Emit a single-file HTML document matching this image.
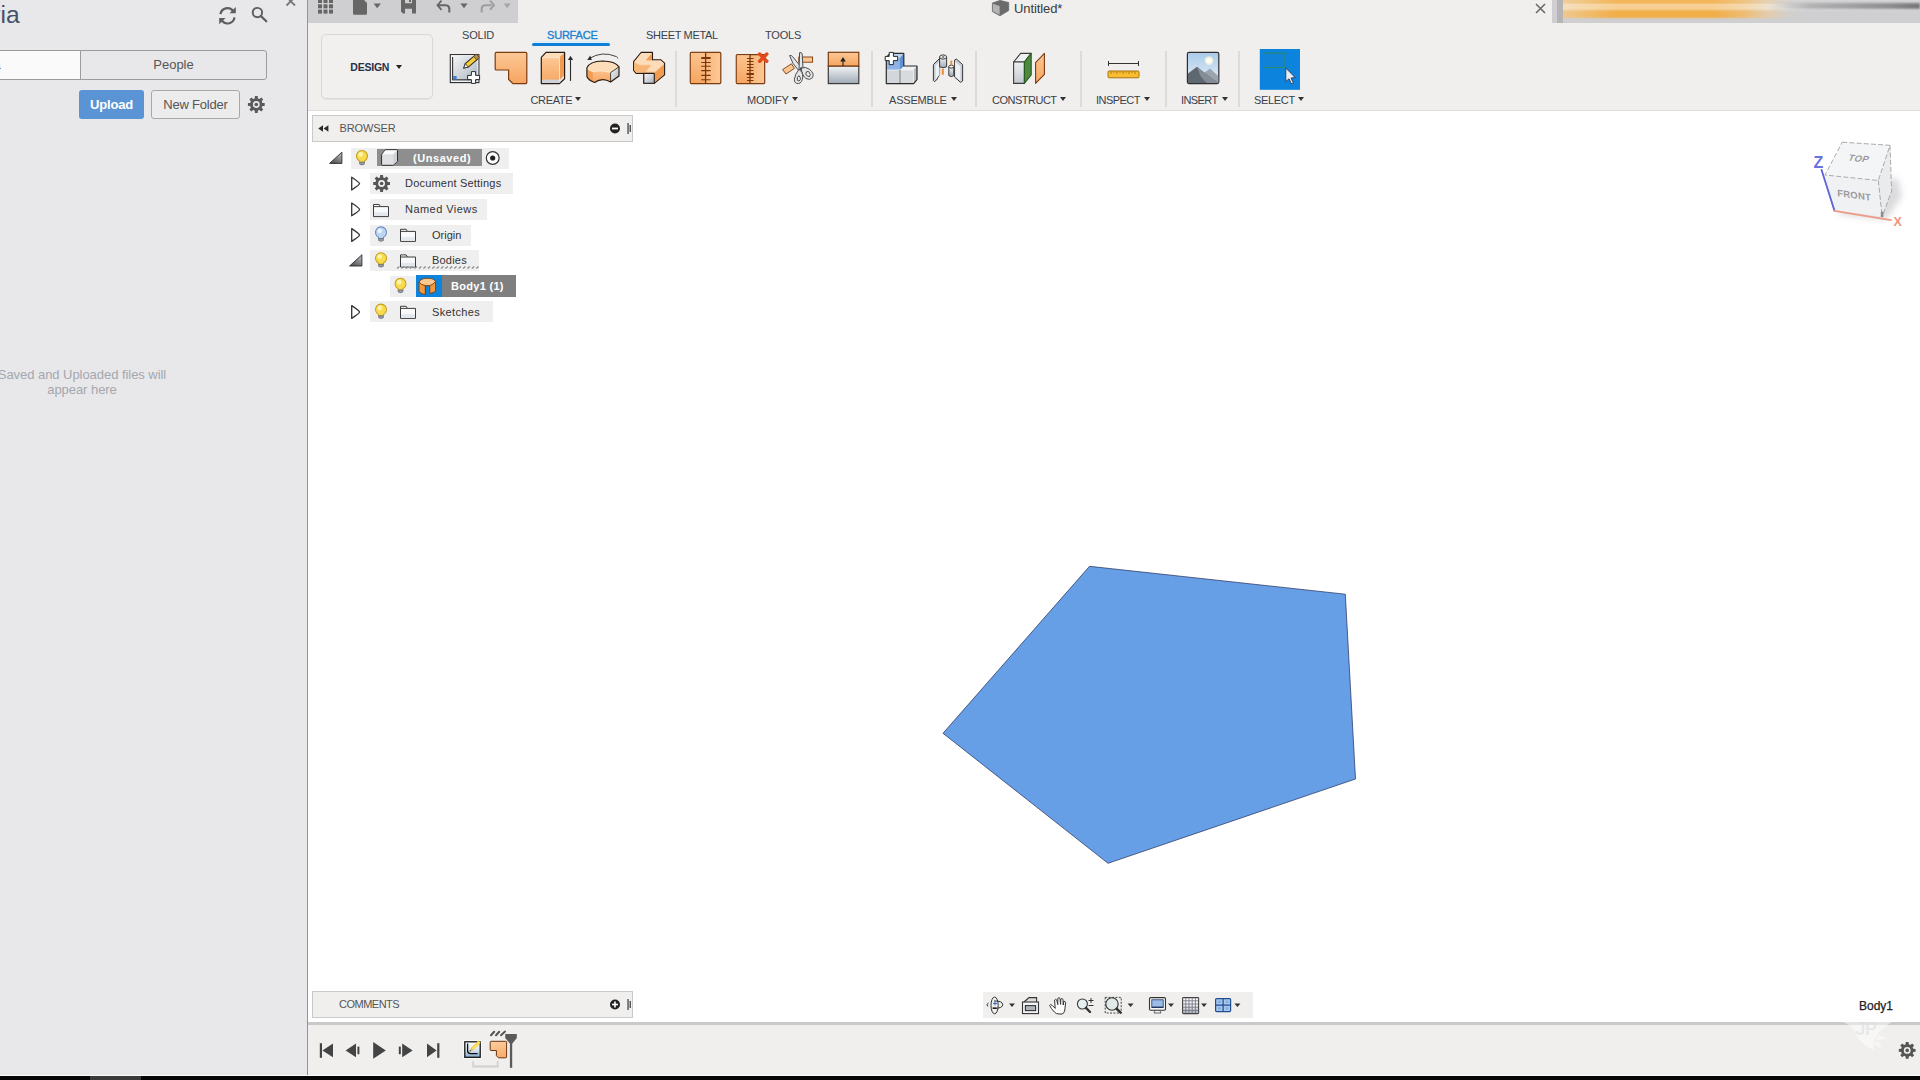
<!DOCTYPE html>
<html lang="en">
<head>
<meta charset="utf-8">
<title>Untitled*</title>
<style>
*{box-sizing:border-box}
html,body{margin:0;padding:0}
body{width:1920px;height:1080px;position:relative;overflow:hidden;background:#fff;font-family:"Liberation Sans",sans-serif;color:#333}
.abs{position:absolute}
svg{position:absolute;overflow:visible}
.lbl{position:absolute;font-size:11px;line-height:12px;color:#3a3f4a;white-space:nowrap;letter-spacing:-0.2px}
.tab{position:absolute;font-size:11px;line-height:12px;color:#3a3f4a;white-space:nowrap;top:29px;letter-spacing:-0.2px}
.sep{position:absolute;top:51px;height:56px;width:2px;background:#dcdbda}
.row{position:absolute;background:#efefef;height:21px}
.rt{position:absolute;font-size:11px;line-height:13px;color:#333;white-space:nowrap}
.dd{position:absolute;width:0;height:0;border-left:3px solid transparent;border-right:3px solid transparent;border-top:4px solid #333}
</style>
</head>
<body>

<!-- ================= LEFT DATA PANEL ================= -->
<div class="abs" id="leftpanel" style="left:0;top:0;width:307px;height:1076px;background:#e8e8ea"></div>
<div class="abs" style="left:307px;top:0;width:1px;height:1076px;background:#939396"></div>


<!-- left panel content -->
<div class="abs" style="left:-7.7px;top:0.8px;font-size:24.6px;line-height:28px;color:#465068;white-space:nowrap">ria</div>
<svg style="left:0;top:0" width="307" height="130" viewBox="0 0 307 130">
  <!-- refresh -->
  <g fill="none" stroke="#5e5e5e" stroke-width="2.2" stroke-linecap="butt">
    <path d="M220.5,14.2 A7,7 0 0 1 233,10.9"/>
    <path d="M234.5,17.4 A7,7 0 0 1 222,20.7"/>
  </g>
  <path d="M235.8,6.9 L235.8,13.3 L229.4,13.3Z" fill="#5e5e5e"/>
  <path d="M219.2,24.3 L219.2,17.9 L225.6,17.9Z" fill="#5e5e5e"/>
  <!-- search -->
  <circle cx="257.4" cy="12.6" r="4.7" fill="none" stroke="#5e5e5e" stroke-width="1.9"/>
  <path d="M260.9,16.1 L266.3,21.3" stroke="#5e5e5e" stroke-width="2.2" stroke-linecap="round"/>
  <!-- close x (cut off) -->
  <path d="M286.5,-3 L295,5.5 M295,-3 L286.5,5.5" stroke="#777" stroke-width="1.8"/>
  <!-- gear -->
  <circle cx="256.3" cy="104.5" r="1.8" fill="#5a5a5a"/><path transform="translate(256.3,104.5)" fill="#5a5a5a" fill-rule="evenodd" d="M6.09,-1.61 L8.38,-1.40 L8.38,1.40 L6.09,1.61 L5.45,3.16 L6.92,4.94 L4.94,6.92 L3.16,5.45 L1.61,6.09 L1.40,8.38 L-1.40,8.38 L-1.61,6.09 L-3.16,5.45 L-4.94,6.92 L-6.92,4.94 L-5.45,3.16 L-6.09,1.61 L-8.38,1.40 L-8.38,-1.40 L-6.09,-1.61 L-5.45,-3.16 L-6.92,-4.94 L-4.94,-6.92 L-3.16,-5.45 L-1.61,-6.09 L-1.40,-8.38 L1.40,-8.38 L1.61,-6.09 L3.16,-5.45 L4.94,-6.92 L6.92,-4.94 L5.45,-3.16Z M3.40,0 A3.40,3.40 0 1,0 -3.40,0 A3.40,3.40 0 1,0 3.40,0Z"/>
</svg>
<!-- tabs -->
<div class="abs" style="left:-107px;top:50px;width:188px;height:30px;background:#fafafa;border:1px solid #9b9b9b;border-radius:3px 0 0 3px;font-size:13px;line-height:28px;text-align:center;color:#555">Data</div>
<div class="abs" style="left:80px;top:50px;width:187px;height:30px;background:#e8e8ea;border:1px solid #9b9b9b;border-radius:0 3px 3px 0;font-size:13px;line-height:28px;text-align:center;color:#555">People</div>
<!-- buttons -->
<div class="abs" style="left:79px;top:90px;width:65px;height:29px;background:#5a94d4;border-radius:3px;font-size:13px;font-weight:bold;line-height:29px;text-align:center;color:#fff;letter-spacing:-0.2px">Upload</div>
<div class="abs" style="left:151px;top:90px;width:89px;height:29px;background:#ececec;border:1px solid #a8a8a8;border-radius:3px;font-size:13px;line-height:28px;text-align:center;color:#555;letter-spacing:-0.2px">New Folder</div>
<!-- empty message -->
<div class="abs" style="left:-8px;top:366.6px;width:180px;font-size:13px;line-height:15.3px;text-align:center;color:#a4a7ae;letter-spacing:-0.05px">Saved and Uploaded files will appear here</div>

<!-- ================= APP BACKGROUND ================= -->
<div class="abs" id="toolbarbg" style="left:308px;top:0;width:1612px;height:110px;background:#f0efee"></div>
<div class="abs" style="left:308px;top:110px;width:1612px;height:1px;background:#dddcdb"></div>
<div class="abs" id="qat" style="left:308px;top:0;width:210px;height:23px;background:#cfcfd1"></div>


<!-- quick access toolbar icons -->
<svg style="left:308px;top:0" width="220" height="23" viewBox="308 0 220 23">
  <g fill="#666">
    <!-- grid -->
    <rect x="318" y="-1" width="4" height="4"/><rect x="323.5" y="-1" width="4" height="4"/><rect x="329" y="-1" width="4" height="4"/>
    <rect x="318" y="4.3" width="4" height="4"/><rect x="323.5" y="4.3" width="4" height="4"/><rect x="329" y="4.3" width="4" height="4"/>
    <rect x="318" y="9.6" width="4" height="4"/><rect x="323.5" y="9.6" width="4" height="4"/><rect x="329" y="9.6" width="4" height="4"/>
    <!-- file -->
    <path d="M353,-2 L362,-2 L367,3 L367,13.5 Q367,14.7 365.8,14.7 L354.2,14.7 Q353,14.7 353,13.5Z"/>
    <path d="M373.6,3.4 L380.8,3.4 L377.2,8.2Z"/>
    <!-- save -->
    <path d="M401,-2 L416,-2 L416,13.5 L403,13.5 L401,11.5Z M405,8.8 L405,13.5 L412,13.5 L412,8.8Z M405,-2 L405,3.2 L412,3.2 L412,-2Z" fill-rule="evenodd"/>
    <rect x="409" y="-2" width="2" height="4" />
    <!-- undo dropdown -->
    <path d="M460.4,3.4 L467.6,3.4 L464,8.2Z"/>
  </g>
  <!-- undo -->
  <path d="M438.5,5.2 L446,5.2 Q449.3,5.4 449.3,9 L449.3,12.6" fill="none" stroke="#666" stroke-width="2"/>
  <path d="M441.5,0.6 L437.5,5.2 L441.5,9.8" fill="none" stroke="#666" stroke-width="1.8"/>
  <!-- redo (disabled) -->
  <path d="M491.5,5.2 L485,5.2 Q481.7,5.4 481.7,9 L481.7,12.6" fill="none" stroke="#9c9c9e" stroke-width="2"/>
  <path d="M490,0.6 L494,5.2 L490,9.8" fill="none" stroke="#9c9c9e" stroke-width="1.8"/>
  <path d="M503.6,3.4 L510.8,3.4 L507.2,8.2Z" fill="#a6a6a8"/>
</svg>

<!-- document title -->
<svg style="left:990px;top:0" width="22" height="18" viewBox="990 0 22 18">
  <path d="M992.4,3 L1000,0.4 L1008.7,2.5 L1008.7,10.6 L1000,15.8 L992.4,11.6Z" fill="#6b6b6b" stroke="#6b6b6b" stroke-width="0.8" stroke-linejoin="round"/>
  <path d="M992.9,3.8 L999.6,6 L999.6,14.8 L992.9,11.2Z" fill="#b4b4b4"/>
</svg>
<div class="abs" style="left:1014px;top:1px;font-size:13px;line-height:16px;color:#3a3a3a;white-space:nowrap;letter-spacing:-0.1px">Untitled*</div>
<svg style="left:1533px;top:2px" width="14" height="13" viewBox="1533 2 14 13">
  <path d="M1536,4 L1545,13 M1545,4 L1536,13" stroke="#666" stroke-width="1.5" fill="none"/>
</svg>

<!-- blurred top-right strip -->
<div class="abs" style="left:1552px;top:0;width:368px;height:23px;background:#cfcfd1"></div>
<div class="abs" style="left:1557px;top:0;width:6px;height:23px;background:#b5b5b7"></div>
<div class="abs" style="left:1563px;top:0;width:357px;height:19px;background:linear-gradient(to right,#efc88e 0,#f0bc6c 25px,#f1ad46 55px,#f1ad46 150px,#edbd76 182px,#e2ccac 205px,#d2cfcc 225px,#cfcfd1 240px,#cfcfd1 100%)"></div>
<div class="abs" style="left:1563px;top:0;width:357px;height:19px;background:linear-gradient(to bottom,rgba(255,255,255,.1) 0,rgba(255,255,255,.12) 3px,rgba(255,255,255,.42) 4.5px,rgba(255,255,255,.42) 8.5px,rgba(255,255,255,.15) 10.5px,rgba(255,255,255,0) 12px,rgba(255,255,255,0) 16.5px,rgba(207,207,209,.85) 19px)"></div>
<div class="abs" style="left:1770px;top:3px;width:150px;height:6px;background:linear-gradient(to right,rgba(140,140,142,0),rgba(140,140,142,.55) 40px,rgba(120,120,122,.8) 120px,rgba(105,105,108,.9));filter:blur(1px)"></div>

<!-- ================= RIBBON ================= -->
<div class="abs" style="left:321px;top:34px;width:111.5px;height:65px;border:1.4px solid #d9d8d8;border-radius:5px;background:#f1f0ef;box-shadow:0 1px 1px rgba(0,0,0,.05)"></div>
<div class="abs" style="left:350.3px;top:60px;font-weight:bold;font-size:10.5px;line-height:14px;color:#283246;white-space:nowrap;letter-spacing:-0.22px">DESIGN</div>
<div class="dd" style="left:396px;top:65px;border-top-color:#222"></div>

<div class="tab" style="left:462px">SOLID</div>
<div class="tab" style="left:547px;color:#1a82d2;-webkit-text-stroke:0.35px #1a82d2">SURFACE</div>
<div class="tab" style="left:646px;letter-spacing:-0.32px">SHEET METAL</div>
<div class="tab" style="left:765px">TOOLS</div>
<div class="abs" style="left:533px;top:41px;width:76px;height:3px;background:#d9edfa;opacity:.8"></div>
<div class="abs" style="left:532px;top:43px;width:78.4px;height:3.2px;background:#0f7fd6;border-radius:1.6px"></div>

<div class="sep" style="left:675px"></div>
<div class="sep" style="left:871px"></div>
<div class="sep" style="left:975px"></div>
<div class="sep" style="left:1080px"></div>
<div class="sep" style="left:1165px"></div>
<div class="sep" style="left:1238px"></div>

<div class="lbl" style="left:530.5px;top:94px;letter-spacing:-0.35px">CREATE</div><div class="dd" style="left:575px;top:97px"></div>
<div class="lbl" style="left:747px;top:94px">MODIFY</div><div class="dd" style="left:792px;top:97px"></div>
<div class="lbl" style="left:889px;top:94px">ASSEMBLE</div><div class="dd" style="left:951px;top:97px"></div>
<div class="lbl" style="left:992px;top:94px;letter-spacing:-0.5px">CONSTRUCT</div><div class="dd" style="left:1060px;top:97px"></div>
<div class="lbl" style="left:1096px;top:94px;letter-spacing:-0.55px">INSPECT</div><div class="dd" style="left:1144px;top:97px"></div>
<div class="lbl" style="left:1181px;top:94px;letter-spacing:-0.6px">INSERT</div><div class="dd" style="left:1222px;top:97px"></div>
<div class="lbl" style="left:1254px;top:94px;letter-spacing:-0.32px">SELECT</div><div class="dd" style="left:1298px;top:97px"></div>

<!-- RIBBON ICONS -->
<svg id="ribbonicons" style="left:440px;top:44px" width="880" height="50" viewBox="440 44 880 50">
<defs>
  <linearGradient id="og" x1="0" y1="0" x2="0" y2="1"><stop offset="0" stop-color="#fdc896"/><stop offset="1" stop-color="#f6a560"/></linearGradient>
  <linearGradient id="og2" x1="0" y1="0" x2="1" y2="0"><stop offset="0" stop-color="#f6a560"/><stop offset="1" stop-color="#fdc896"/></linearGradient>
  <linearGradient id="gg" x1="0" y1="0" x2="0" y2="1"><stop offset="0" stop-color="#f4f5f6"/><stop offset="1" stop-color="#9ea9b6"/></linearGradient>
  <linearGradient id="ggl" x1="0" y1="0" x2="0" y2="1"><stop offset="0" stop-color="#eef0f2"/><stop offset="1" stop-color="#c2c8cf"/></linearGradient>
  <linearGradient id="gg2" x1="0" y1="0" x2="1" y2="1"><stop offset="0" stop-color="#fafafa"/><stop offset="1" stop-color="#a7b1bd"/></linearGradient>
  <linearGradient id="sky" x1="0" y1="0" x2="0" y2="1"><stop offset="0" stop-color="#a9cbea"/><stop offset="1" stop-color="#e6eff6"/></linearGradient>
</defs>

<!-- 1 sketch -->
<g>
  <rect x="450.3" y="54.6" width="28.6" height="28" fill="url(#gg2)" stroke="#2b2b2b" stroke-width="1.1"/>
  <rect x="451.4" y="55.7" width="26.4" height="25.8" fill="none" stroke="#fff" stroke-width="0.9" opacity=".85"/>
  <path d="M452.6,57 L452.6,79.8 L470,79.8" fill="none" stroke="#333" stroke-width="1.1"/>
  <rect x="453.2" y="76" width="3.4" height="3.4" fill="#3f7fd6"/>
  <g transform="translate(463.8,68) rotate(-41)">
    <path d="M0,0 L4,-2.3 L17,-2.3 L17,2.3 L4,2.3Z" fill="#f7cd3c" stroke="#2e2a1a" stroke-width="1"/>
    <path d="M0,0 L4,-2.3 L4,2.3Z" fill="#fff" stroke="#333" stroke-width="0.8"/>
    <rect x="15" y="-2.3" width="3.6" height="4.6" fill="#b98a5a" stroke="#5a4a1a" stroke-width="0.8"/>
  </g>
  <path d="M471.4,71.6 L475.6,71.6 L475.6,75.4 L479.6,75.4 L479.6,79.6 L475.6,79.6 L475.6,83.4 L471.4,83.4 L471.4,79.6 L467.6,79.6 L467.6,75.4 L471.4,75.4Z" fill="#fff" stroke="#2b2b2b" stroke-width="1"/>
</g>
<!-- 2 patch -->
<path d="M496.2,52.3 L525.8,52.3 Q526.8,52.3 526.8,53.3 L526.8,82.6 Q526.8,83.6 525.8,83.6 L513,83.6 L508.6,79.4 L508.6,70 L496.2,70 Q495.2,70 495.2,69 L495.2,53.3 Q495.2,52.3 496.2,52.3Z" fill="url(#og)" stroke="#7a3b0e" stroke-width="1.2"/>
<!-- 3 extrude -->
<g stroke-linejoin="round">
  <path d="M541.3,57.3 L546,52.4 L564.6,52.4 L559.5,57.3Z" fill="#fddcba"/>
  <path d="M559.5,57.3 L564.6,52.4 L564.6,78.8 L559.5,83.6Z" fill="#f19b52"/>
  <path d="M541.3,57.3 L559.5,57.3 L559.5,83.6 L541.3,83.6Z" fill="url(#og)"/>
  <path d="M541.9,79.6 L559,79.6 L559,83 L541.9,83Z" fill="#cdd2d8"/>
  <path d="M560,79.4 L564,75.6 L564,78.6 L560,82.6Z" fill="#e4e7ea"/>
  <path d="M541.8,57.6 L559.5,57.6 L559.5,83" fill="none" stroke="#fee9d2" stroke-width="0.8"/>
  <path d="M541.3,57.3 L546,52.4 L564.6,52.4 L564.6,78.8 L559.5,83.6 L541.3,83.6Z" fill="none" stroke="#2a1c12" stroke-width="1.2"/>
</g>
<path d="M570.5,58 L570.5,80.9" stroke="#2b2b2b" stroke-width="1.1"/>
<path d="M570.5,55.8 L573.1,60 L567.9,60Z" fill="#2b2b2b"/>
<!-- 4 revolve -->
<path d="M589.6,58.4 Q602,50.6 616.4,56.6 Q617.8,57.4 617.8,58.4" fill="none" stroke="#444" stroke-width="1"/>
<path d="M587.2,59.9 L590.2,55.6 L591.8,59.9Z" fill="#2b2b2b"/>
<g stroke-linejoin="round">
  <path d="M586.9,67.9 L586.9,76.6 Q588.6,80.6 594.5,82.5 Q602.6,77 610.6,82.1 L610.6,72.6 Q601,69.6 593,71.6 Q588.2,70.6 586.9,67.9Z" fill="url(#og)"/>
  <path d="M587.4,68.6 L592.8,71.8 L592.8,81.6 Q588.4,80 587.4,76.4Z" fill="#f29c54"/>
  <path d="M586.9,67.9 Q589.4,61.4 602.8,61 Q615,61.2 619,66.8 L610.6,72.6 Q601,69.6 593,71.6 Q588.2,70.6 586.9,67.9Z" fill="#fddcba"/>
  <path d="M610.6,72.6 L619,66.8 L619,75.9 L610.6,82.1Z" fill="url(#gg2)"/>
  <path d="M587.6,68.8 Q589,70.8 593,71.6 Q601,69.6 610.6,72.6 L610.6,81.6" fill="none" stroke="#fee9d2" stroke-width="0.8"/>
  <path d="M610.6,82 L610.6,72.6 L618.8,67" fill="none" stroke="#3a2a1e" stroke-width="0.9"/>
  <path d="M586.9,67.9 Q589.4,61.4 602.8,61 Q615,61.2 619,66.8 L619,75.9 L610.6,82.1 Q602.6,77 594.5,82.5 Q588.6,80.6 586.9,76.6Z" fill="none" stroke="#2a1c12" stroke-width="1.2"/>
</g>
<!-- 5 sweep -->
<g stroke-linejoin="round">
  <path d="M633.6,61.7 L641.2,52.4 L652.5,52.4 L652.5,59.9 L660.9,59.9 L664.6,63.1 L664.6,74.8 L654.3,83.2 L643.8,83.2 L643.8,73.4 L636.1,73.4 L633.6,70.4Z" fill="#fbc592" stroke="#2a1c12" stroke-width="1.1"/>
  <path d="M634.2,62 L641.5,53 L652,53 L645.6,60.4 L660.6,60.4 L664,63.4 L654.4,71.6 L646,71.6 L651.6,64.8 L640,64.8Z" fill="#fddcba"/>
  <path d="M652,53 L652,60.2 L646,60.2Z" fill="#f19b52"/>
  <path d="M654.6,73 L664,64.6 L664,74.6 L654.6,82.4Z" fill="#f19b52"/>
  <path d="M634.2,63 L640,65.4 L650.6,65.4 L645.4,72 L636.4,72.8 L634.2,70.2Z" fill="#f9b676"/>
  <rect x="643.8" y="73.4" width="10.5" height="9.8" fill="url(#gg2)" stroke="#2a1c12" stroke-width="1.1"/>
</g>
<!-- 6 stitch -->
<rect x="690.3" y="52.3" width="30.5" height="31.3" rx="1" fill="url(#og2)" stroke="#7a3b0e" stroke-width="1.2"/>
<rect x="690.9" y="52.9" width="14.6" height="30.1" fill="url(#og)" opacity=".85"/>
<g stroke="#7a360c" stroke-width="1.1">
  <path d="M705.6,52.4 L705.6,83.6" stroke-width="1.3"/>
  <path d="M701.2,58 L710.6,58" stroke-width="2"/>
  <path d="M701.2,62.5 L710.6,62.5 M701.2,66.3 L710.6,66.3 M701.2,70.6 L710.6,70.6 M701.2,75.4 L710.6,75.4 M701.2,79.7 L710.6,79.7"/>
</g>
<!-- 7 unstitch -->
<rect x="736.3" y="54.6" width="28.4" height="29" rx="1" fill="url(#og2)" stroke="#7a3b0e" stroke-width="1.2"/>
<rect x="736.9" y="55.2" width="13" height="27.8" fill="url(#og)" opacity=".85"/>
<g stroke="#7a360c" stroke-width="1.1">
  <path d="M750,54.8 L750,83.6" stroke-width="1.3"/>
  <path d="M747,58.5 L753.5,58.5 M747,61.5 L753.5,61.5 M747,64.5 L753.5,64.5 M747,67.5 L753.5,67.5 M747,70.5 L753.5,70.5 M747,77.5 L753.5,77.5 M747,80.5 L753.5,80.5"/>
  <path d="M746.6,74 L753.9,74" stroke-width="2"/>
</g>
<path d="M759.6,54 L766.8,61.2 M766.8,54 L759.6,61.2" stroke="#e04a1c" stroke-width="3.4" stroke-linecap="round"/>
<!-- 8 trim -->
<g stroke="#7a3b0e" stroke-width="0.9">
  <rect x="798.8" y="57" width="13.8" height="5.2" fill="#fbc590"/>
  <path d="M782.6,69.6 L791.4,63.8 L794.4,68.4 L786,74Z" fill="#fbc590"/>
</g>
<g stroke="#4c4c4c" stroke-width="1" fill="#e4e6e9" stroke-linejoin="round">
  <path d="M789.6,55.6 Q791.5,55 792.6,56.6 L802.4,68.6 L798.6,70.4 Q792,64 789.6,55.6Z"/>
  <path d="M799.6,52.6 Q801.8,52.2 802.2,54 L803,68 L799,69.6Z"/>
  <path d="M801,68 Q806,66.4 809.6,69.4 Q814.6,73.4 812.6,77.6 Q810,80.6 806,78.6 Q802.4,76 801,68Z M808.6,71.4 Q805.6,71 805.8,74 Q807,77 809.6,76.6 Q811.4,75 808.6,71.4Z" fill-rule="evenodd"/>
  <path d="M799,69.4 Q803,72 802.8,77 Q802,83 798.6,83.6 Q794,83.6 794.4,79.2 Q795,74 799,69.4Z M798.8,75.6 Q796.6,77.6 797.4,80.4 Q799,82 800.4,79.6 Q800.8,77 798.8,75.6Z" fill-rule="evenodd"/>
</g>
<circle cx="801" cy="68.2" r="0.9" fill="#444"/>
<!-- 9 extend -->
<rect x="828.3" y="66" width="30.5" height="17.6" fill="url(#gg)" stroke="#3c3c3c" stroke-width="1.2"/>
<rect x="828.3" y="52.3" width="30.5" height="13.7" fill="url(#og)" stroke="#7a3b0e" stroke-width="1.2"/>
<path d="M843,66 L843,60" stroke="#222" stroke-width="1.1"/>
<path d="M843,57 L845.8,61.4 L840.2,61.4Z" fill="#222"/>
<!-- 10 new component -->
<g stroke-linejoin="round">
  <path d="M886.3,70 L900,70 L900,83.6 L886.3,83.6Z" fill="#d3d6da"/>
  <path d="M900,70 L913.6,70 L913.6,83.6 L900,83.6Z" fill="#d8dbde"/>
  <path d="M900,70 L903.8,66 L917,66 L913.6,70Z" fill="#f0f1f3"/>
  <path d="M913.6,70 L917,66 L917,79.6 L913.6,83.6Z" fill="#b4b9c0"/>
  <path d="M886.3,57.4 L900,57.4 L900,70 L886.3,70Z" fill="#8db2e6"/>
  <path d="M886.3,57.4 L890.2,53.4 L903.8,53.4 L900,57.4Z" fill="#bcd3f1"/>
  <path d="M900,57.4 L903.8,53.4 L903.8,66 L900,70Z" fill="#5f90d2"/>
  <path d="M886.8,70 L913.6,70 M900,70.4 L900,83.2 M913.6,70.2 L913.6,83.2" fill="none" stroke="#f4f5f6" stroke-width="0.8"/>
  <path d="M900,70 L900,83.6" fill="none" stroke="#555" stroke-width="0.8"/>
  <path d="M886.3,57.4 L890.2,53.4 L903.8,53.4 L903.8,66 L917,66 L917,79.6 L913.6,83.6 L886.3,83.6Z" fill="none" stroke="#2b2b2b" stroke-width="1.2"/>
  <path d="M889.2,52.4 L893.4,52.4 L893.4,56.4 L897.6,56.4 L897.6,60.6 L893.4,60.6 L893.4,64.6 L889.2,64.6 L889.2,60.6 L885.2,60.6 L885.2,56.4 L889.2,56.4Z" fill="#fff" stroke="#2b2b2b" stroke-width="1"/>
</g>
<!-- 11 joint -->
<g stroke="#3a3a3a" stroke-width="1" stroke-linejoin="round">
  <path d="M933.4,64.6 L939.6,58.4 L939.6,74.4 L936.6,80 L934.4,81.6 L933.4,80.6Z" fill="#c9ced5"/>
  <path d="M935.6,65.6 L939.6,61.6 L939.6,74.4 L935.6,79.6Z" fill="#eef0f2" stroke="none"/>
  <path d="M939.6,57 L939.6,66.8 Q943,68.8 946.6,66.8 L946.6,57Z" fill="url(#gg)"/>
  <ellipse cx="943.1" cy="57" rx="3.5" ry="2.1" fill="#f7f8f9"/>
  <ellipse cx="943.1" cy="57" rx="1.4" ry="0.8" fill="#555" stroke="none"/>
  <path d="M954.6,60 L956.4,59 L962.6,64.6 L962.6,81 L960.6,82.4 L954.6,77Z" fill="#c9ced5"/>
  <path d="M955.2,61.6 L960.4,66.4 L960.4,81 L955.2,76.4Z" fill="#eef0f2" stroke="none"/>
  <path d="M948.8,66.6 L948.8,75.6 Q951.3,77.6 953.8,75.6 L953.8,66.6Z" fill="url(#gg)"/>
  <ellipse cx="951.3" cy="66.6" rx="2.5" ry="1.5" fill="#f7f8f9"/>
</g>
<rect x="941.8" y="68.8" width="2" height="6" fill="#ef8a2e"/>
<rect x="950.4" y="60.6" width="1.8" height="4.6" fill="#ef8a2e"/>
<!-- 12 construct -->
<g stroke="#3c3c3c" stroke-width="1.1" stroke-linejoin="round">
  <path d="M1013.6,62 L1020.6,53.4 L1031.2,53.4 L1024.4,62Z" fill="#f0f1f2"/>
  <path d="M1013.6,62 L1024.4,62 L1024.4,83.4 L1013.6,83.4Z" fill="url(#ggl)"/>
  <path d="M1024.4,62 L1031.2,53.4 L1031.2,75 L1024.4,83.4Z" fill="#4c8b3e" stroke="#2c5a22"/>
  <path d="M1035.6,62.6 L1044.4,53.4 L1044.4,74.4 L1035.6,83.4Z" fill="url(#og)" stroke="#7a3b0e"/>
</g>
<!-- 13 measure -->
<path d="M1108.5,63.5 L1138.5,63.5 M1108.5,61 L1108.5,66 M1138.5,61 L1138.5,66" stroke="#333" stroke-width="1" fill="none"/>
<rect x="1108" y="71" width="31" height="6.8" rx="1" fill="#f8bd30" stroke="#a8740e" stroke-width="1"/>
<path d="M1111,71.5 L1111,74 M1114,71.5 L1114,73 M1117,71.5 L1117,74 M1120,71.5 L1120,73 M1123,71.5 L1123,74 M1126,71.5 L1126,73 M1129,71.5 L1129,74 M1132,71.5 L1132,73 M1135,71.5 L1135,74" stroke="#a36d0c" stroke-width="0.8"/>
<!-- 14 insert -->
<rect x="1187.4" y="52.4" width="31.4" height="31.2" rx="1.5" fill="url(#sky)" stroke="#2f2f2f" stroke-width="1.2"/>
<circle cx="1209" cy="60.6" r="4.4" fill="#fdf6d8" opacity=".7"/>
<circle cx="1209" cy="60.6" r="2.8" fill="#fffdf0"/>
<path d="M1204,73 L1210,68.6 L1218.2,76 L1218.2,83 L1204,83Z" fill="#9aa4ae"/>
<path d="M1188,73.4 L1197,66.8 L1201,70 L1218.2,83 L1188,83Z" fill="#5f676f"/>
<path d="M1197,66.8 L1201,70 L1218.2,83 L1207,83 Q1200,77 1199,72Z" fill="#848d96"/>
<!-- 15 select -->
<rect x="1259.8" y="49" width="40.2" height="40.8" fill="#0c83dc"/>
<rect x="1263.5" y="53" width="21.5" height="14.6" fill="#1083d8" stroke="#2f8a62" stroke-width="1"/>
<path d="M1285.8,68 L1285.8,81.6 L1289,78.8 L1291.4,83.8 L1293.4,82.8 L1291,78 L1295.2,77.6Z" fill="#e9eef4" stroke="#2a3a55" stroke-width="0.9" stroke-linejoin="round"/>

</svg>

<!-- ================= CANVAS ================= -->
<svg id="canvas" style="left:308px;top:111px" width="1612" height="912" viewBox="308 111 1612 912">
  <polygon points="1089.5,566.3 1345.3,594.2 1355.5,779 1108,863.3 943,733.3" fill="#679fe6" stroke="#1f2c5a" stroke-width="0.7"/>
</svg>


<!-- ================= BOTTOM ================= -->
<div class="abs" style="left:308px;top:1022px;width:1612px;height:3px;background:#c9c8ca"></div>
<div class="abs" id="timelinebg" style="left:308px;top:1025px;width:1612px;height:51px;background:#f0efee"></div>
<div class="abs" style="left:0;top:1075px;width:1920px;height:1px;background:rgba(255,255,255,.8)"></div>
<div class="abs" style="left:0;top:1076px;width:1920px;height:4px;background:#060606"></div>
<div class="abs" style="left:90px;top:1076px;width:51px;height:4px;background:#3a3a3a"></div>


<!-- ================= BROWSER ================= -->
<div class="abs" style="left:312px;top:115px;width:321px;height:27px;background:#f0efee;border:1px solid #c9c9c9"></div>
<div class="abs" style="left:339.5px;top:122px;font-size:11px;line-height:13px;color:#555;white-space:nowrap;letter-spacing:-0.1px">BROWSER</div>
<div class="row" style="left:351px;top:148px;width:158px"></div>
<div class="row" style="left:370px;top:173px;width:143px"></div>
<div class="row" style="left:370px;top:199px;width:117px"></div>
<div class="row" style="left:370px;top:225px;width:101px"></div>
<div class="row" style="left:370px;top:250px;width:109px"></div>
<div class="row" style="left:390px;top:276px;width:26px"></div>
<div class="row" style="left:370px;top:301px;width:123px"></div>
<div class="abs" style="left:377px;top:149px;width:105px;height:17px;background:#8e8e8e"></div>
<div class="abs" style="left:416px;top:275px;width:26px;height:22px;background:#0c83dc"></div>
<div class="abs" style="left:442px;top:275px;width:74px;height:22px;background:#7f7f7f"></div>
<div class="rt" style="left:413px;top:152px;color:#fff;font-weight:bold;letter-spacing:0.55px">(Unsaved)</div>
<div class="rt" style="left:405px;top:177px;letter-spacing:0.2px">Document Settings</div>
<div class="rt" style="left:405px;top:203px;letter-spacing:0.45px">Named Views</div>
<div class="rt" style="left:432px;top:229px">Origin</div>
<div class="rt" style="left:432px;top:254px;letter-spacing:0.2px">Bodies</div>
<div class="rt" style="left:451px;top:280px;color:#fff;font-weight:bold;letter-spacing:0.3px">Body1 (1)</div>
<div class="rt" style="left:432px;top:306px;letter-spacing:0.35px">Sketches</div>
<svg id="browsericons" style="left:308px;top:111px" width="340" height="230" viewBox="308 111 340 230">
  <defs><linearGradient id="trig" x1="1" y1="0" x2="0.4" y2="1"><stop offset="0" stop-color="#c4c4c6"/><stop offset="1" stop-color="#55575c"/></linearGradient></defs>
  <!-- header icons -->
  <path d="M323,125.3 L323,131.7 L318.2,128.5Z M328.4,125.3 L328.4,131.7 L323.6,128.5Z" fill="#2b2b2b"/>
  <circle cx="615" cy="128.5" r="5" fill="#222"/><rect x="612" y="127.6" width="6" height="1.8" fill="#fff"/>
  <rect x="627.4" y="123" width="1.3" height="11" fill="#444"/><rect x="629.6" y="125" width="1.3" height="7" fill="#444"/>
  <!-- row1 -->
  <path d="M341.9,152.2 L341.9,163.4 L329.6,163.4Z" fill="url(#trig)" stroke="#2a2a2a" stroke-width="0.9" stroke-linejoin="round"/>
  <g>
  <path d="M359.7,162.2 L359.5,160.9 A5.5,5.5 0 1 1 364.5,160.9 L364.3,162.2Z" fill="#f8dc4e" stroke="#c9a026" stroke-width="1.1"/>
  <ellipse cx="360.7" cy="154.4" rx="2.3" ry="2.4" fill="#fdf6b8" opacity=".9"/>
  <path d="M359.7,162.2 L364.3,162.2 L364.3,164.2 Q362.0,165.6 359.7,164.2Z" fill="#9aa0aa" stroke="#5f6570" stroke-width="0.7"/>
</g>
  <path d="M381.6,155 Q381.6,154.4 382,154 L385,150.2 Q385.4,149.7 386,149.7 L396.8,149.7 Q397.5,149.7 397.5,150.4 L397.5,161 Q397.5,161.4 397.2,161.7 L393.6,165 Q393.2,165.3 392.8,165.3 L382.4,165.3 Q381.6,165.3 381.6,164.6Z" fill="#dfe0e3" stroke="#2f2f2f" stroke-width="1" stroke-linejoin="round"/>
  <path d="M382.3,154.3 L385.4,150.4 L396.8,150.4 L393.2,154.3Z" fill="#fbfbfc"/>
  <path d="M393.4,154.6 L396.9,150.8 L396.9,161 L393.4,164.4Z" fill="#cfd1d5"/>
  <circle cx="492.7" cy="158" r="6.4" fill="#fff" stroke="#333" stroke-width="1.2"/><circle cx="492.7" cy="158" r="2.6" fill="#222"/>
  <!-- row2 -->
  <path d="M351.7,177.2 L351.7,190.0 Q359.6,184.79999999999998 359.6,183.6 Q359.6,182.4 351.7,177.2Z" fill="#fdfdfd" stroke="#333" stroke-width="1.3" stroke-linejoin="round"/>
  <path transform="translate(381.6,183.5)" fill="#555" fill-rule="evenodd" d="M6.09,-1.61 L8.38,-1.40 L8.38,1.40 L6.09,1.61 L5.45,3.16 L6.92,4.94 L4.94,6.92 L3.16,5.45 L1.61,6.09 L1.40,8.38 L-1.40,8.38 L-1.61,6.09 L-3.16,5.45 L-4.94,6.92 L-6.92,4.94 L-5.45,3.16 L-6.09,1.61 L-8.38,1.40 L-8.38,-1.40 L-6.09,-1.61 L-5.45,-3.16 L-6.92,-4.94 L-4.94,-6.92 L-3.16,-5.45 L-1.61,-6.09 L-1.40,-8.38 L1.40,-8.38 L1.61,-6.09 L3.16,-5.45 L4.94,-6.92 L6.92,-4.94 L5.45,-3.16Z M3.40,0 A3.40,3.40 0 1,0 -3.40,0 A3.40,3.40 0 1,0 3.40,0Z"/><circle cx="381.6" cy="183.5" r="1.8" fill="#555"/>
  <!-- row3 -->
  <path d="M351.7,203.0 L351.7,215.8 Q359.6,210.6 359.6,209.4 Q359.6,208.20000000000002 351.7,203.0Z" fill="#fdfdfd" stroke="#333" stroke-width="1.3" stroke-linejoin="round"/>
  <path d="M373.5,204.5 L379.2,204.5 L380.4,206.6 L388.5,206.6 L388.5,216.6 L373.5,216.6Z" fill="#f8f9fa" stroke="#3c3c3c" stroke-width="1"/>
<path d="M373.5,206.6 L380.4,206.6" stroke="#3c3c3c" stroke-width="1" fill="none"/>
<path d="M374.2,212.4 L387.8,212.4 L387.8,216 L374.2,216Z" fill="#e3e8ee"/>
  <!-- row4 -->
  <path d="M351.7,228.6 L351.7,241.4 Q359.6,236.2 359.6,235 Q359.6,233.8 351.7,228.6Z" fill="#fdfdfd" stroke="#333" stroke-width="1.3" stroke-linejoin="round"/>
  <g>
  <path d="M378.7,238.6 L378.5,237.3 A5.5,5.5 0 1 1 383.5,237.3 L383.3,238.6Z" fill="#bdd6f4" stroke="#6f90be" stroke-width="1.1"/>
  <ellipse cx="379.7" cy="230.8" rx="2.3" ry="2.4" fill="#eef5fd" opacity=".9"/>
  <path d="M378.7,238.6 L383.3,238.6 L383.3,240.6 Q381.0,242.0 378.7,240.6Z" fill="#9aa0aa" stroke="#5f6570" stroke-width="0.7"/>
</g>
  <path d="M400.5,229.3 L406.2,229.3 L407.4,231.4 L415.5,231.4 L415.5,241.4 L400.5,241.4Z" fill="#f8f9fa" stroke="#3c3c3c" stroke-width="1"/>
<path d="M400.5,231.4 L407.4,231.4" stroke="#3c3c3c" stroke-width="1" fill="none"/>
<path d="M401.2,237.20000000000002 L414.8,237.20000000000002 L414.8,240.8 L401.2,240.8Z" fill="#e3e8ee"/>
  <!-- row5 -->
  <path d="M361.9,254.8 L361.9,266.0 L349.6,266.0Z" fill="url(#trig)" stroke="#2a2a2a" stroke-width="0.9" stroke-linejoin="round"/>
  <g>
  <path d="M378.7,264.4 L378.5,263.1 A5.5,5.5 0 1 1 383.5,263.1 L383.3,264.4Z" fill="#f8dc4e" stroke="#c9a026" stroke-width="1.1"/>
  <ellipse cx="379.7" cy="256.6" rx="2.3" ry="2.4" fill="#fdf6b8" opacity=".9"/>
  <path d="M378.7,264.4 L383.3,264.4 L383.3,266.4 Q381.0,267.8 378.7,266.4Z" fill="#9aa0aa" stroke="#5f6570" stroke-width="0.7"/>
</g>
  <path d="M400.5,254.9 L406.2,254.9 L407.4,257.0 L415.5,257.0 L415.5,267.0 L400.5,267.0Z" fill="#f8f9fa" stroke="#3c3c3c" stroke-width="1"/>
<path d="M400.5,257.0 L407.4,257.0" stroke="#3c3c3c" stroke-width="1" fill="none"/>
<path d="M401.2,262.8 L414.8,262.8 L414.8,266.4 L401.2,266.4Z" fill="#e3e8ee"/>
  <g stroke="#8c8c8c" stroke-width="1.3"><path d="M397,268.6 l2.4,-2 M401.4,268.6 l2.4,-2 M405.8,268.6 l2.4,-2 M410.2,268.6 l2.4,-2 M414.6,268.6 l2.4,-2 M419,268.6 l2.4,-2 M423.4,268.6 l2.4,-2 M427.8,268.6 l2.4,-2 M432.2,268.6 l2.4,-2 M436.6,268.6 l2.4,-2 M441,268.6 l2.4,-2 M445.4,268.6 l2.4,-2 M449.8,268.6 l2.4,-2 M454.2,268.6 l2.4,-2 M458.6,268.6 l2.4,-2 M463,268.6 l2.4,-2 M467.4,268.6 l2.4,-2 M471.8,268.6 l2.4,-2 M476.2,268.6 l2.4,-2"/></g>
  <!-- row6 body -->
  <g>
  <path d="M398.2,290.0 L398.0,288.7 A5.5,5.5 0 1 1 403.0,288.7 L402.8,290.0Z" fill="#f8dc4e" stroke="#c9a026" stroke-width="1.1"/>
  <ellipse cx="399.2" cy="282.2" rx="2.3" ry="2.4" fill="#fdf6b8" opacity=".9"/>
  <path d="M398.2,290.0 L402.8,290.0 L402.8,292.0 Q400.5,293.4 398.2,292.0Z" fill="#9aa0aa" stroke="#5f6570" stroke-width="0.7"/>
</g>
  <g stroke="#7a3b0e" stroke-width="0.9" stroke-linejoin="round">
    <path d="M419,282 L419,291.6 Q421.4,294.4 425.4,294.4 L425.4,285.6 L429.8,285.6 L429.8,293.4 Q433.8,293 435.6,291 L435.6,281.6Z" fill="#f39a3c"/>
    <path d="M419,282 Q421,278.2 427.4,278.2 Q433.8,278.2 435.6,281.6 Q433,284.6 429.8,285.6 L425.4,285.6 Q421,285 419,282Z" fill="#fbc88f"/>
    <path d="M425.4,285.6 L425.4,294.4" fill="none"/>
  </g>
  <!-- row7 -->
  <path d="M351.7,305.6 L351.7,318.4 Q359.6,313.2 359.6,312 Q359.6,310.8 351.7,305.6Z" fill="#fdfdfd" stroke="#333" stroke-width="1.3" stroke-linejoin="round"/>
  <g>
  <path d="M378.7,315.8 L378.5,314.5 A5.5,5.5 0 1 1 383.5,314.5 L383.3,315.8Z" fill="#f8dc4e" stroke="#c9a026" stroke-width="1.1"/>
  <ellipse cx="379.7" cy="308.0" rx="2.3" ry="2.4" fill="#fdf6b8" opacity=".9"/>
  <path d="M378.7,315.8 L383.3,315.8 L383.3,317.8 Q381.0,319.2 378.7,317.8Z" fill="#9aa0aa" stroke="#5f6570" stroke-width="0.7"/>
</g>
  <path d="M400.5,306.3 L406.2,306.3 L407.4,308.40000000000003 L415.5,308.40000000000003 L415.5,318.40000000000003 L400.5,318.40000000000003Z" fill="#f8f9fa" stroke="#3c3c3c" stroke-width="1"/>
<path d="M400.5,308.40000000000003 L407.4,308.40000000000003" stroke="#3c3c3c" stroke-width="1" fill="none"/>
<path d="M401.2,314.2 L414.8,314.2 L414.8,317.8 L401.2,317.8Z" fill="#e3e8ee"/>
</svg>

<!-- ================= COMMENTS ================= -->
<div class="abs" style="left:312px;top:991px;width:321px;height:27px;background:#f0efee;border:1px solid #c9c9c9"></div>
<div class="abs" style="left:339px;top:998px;font-size:11px;line-height:13px;color:#555;white-space:nowrap;letter-spacing:-0.5px">COMMENTS</div>
<svg style="left:608px;top:996px" width="26" height="18" viewBox="608 996 26 18">
  <circle cx="615" cy="1004.5" r="5" fill="#222"/><rect x="612" y="1003.7" width="6" height="1.6" fill="#fff"/><rect x="614.2" y="1001.5" width="1.6" height="6" fill="#fff"/>
  <rect x="627.4" y="999" width="1.3" height="11" fill="#444"/><rect x="629.6" y="1001" width="1.3" height="7" fill="#444"/>
</svg>


<!-- ================= NAV BAR ================= -->
<div class="abs" style="left:983px;top:992px;width:270px;height:26px;background:#f0efee"></div>
<svg id="navicons" style="left:983px;top:992px" width="270" height="26" viewBox="983 992 270 26">
  <g fill="#333">
    <path d="M1009,1003.4 L1015,1003.4 L1012,1007Z"/>
    <path d="M1127.6,1003.4 L1133.6,1003.4 L1130.6,1007Z"/>
    <path d="M1168,1003.4 L1174,1003.4 L1171,1007Z"/>
    <path d="M1201,1003.4 L1207,1003.4 L1204,1007Z"/>
    <path d="M1234.4,1003.4 L1240.4,1003.4 L1237.4,1007Z"/>
  </g>
  <!-- orbit -->
  <g fill="none" stroke="#333" stroke-width="1">
    <ellipse cx="994.6" cy="1005.4" rx="3.6" ry="8.4"/>
    <path d="M988.6,1003 Q985.4,1004.4 988,1006.4 M994,1001 Q1002.4,1000.6 1002.8,1004.8 Q1002.4,1008.4 994,1008.4"/>
  </g>
  <path d="M993,1003.4 L997,1003.4 M995,1001.4 L995,1005.4" stroke="#2b6cc4" stroke-width="1"/>
  <rect x="992.6" y="1007.4" width="4" height="1.6" fill="#222"/>
  <!-- look at -->
  <g stroke="#333" stroke-width="1.1" fill="#f4f4f4">
    <path d="M1024,1002 L1029,997.6 L1036.6,997.6 L1036.6,1002" fill="#ddd"/>
    <rect x="1022.5" y="1002" width="16" height="11.6"/>
    <rect x="1025.4" y="1005.6" width="10.2" height="5" fill="#aeb4bc"/>
  </g>
  <!-- hand -->
  <path d="M1052.4,1005.6 Q1050,1003.6 1049.6,1005.4 Q1051,1008.6 1054.4,1012 Q1056,1014 1059,1014 L1062,1014 Q1064.4,1013.4 1064.8,1010 L1065.6,1002.6 Q1065.4,1001 1063.8,1001.4 L1063.2,1005 L1063,999.4 Q1062,997.8 1060.8,999.2 L1060.6,1004.4 L1060,998.4 Q1059,997 1057.8,998.4 L1057.8,1004.6 L1056.8,1000 Q1055.6,998.6 1054.6,1000 L1055.2,1008.4Z" fill="#fff" stroke="#333" stroke-width="1" stroke-linejoin="round"/>
  <!-- zoom -->
  <circle cx="1082.4" cy="1004" r="5" fill="#e6eef0" stroke="#333" stroke-width="1.1"/>
  <path d="M1086,1007.8 L1090,1012" stroke="#333" stroke-width="2.4" stroke-linecap="round"/>
  <path d="M1088.5,1000.5 L1093.5,1000.5 M1091,998 L1091,1003 M1088.5,1005.5 L1093.5,1005.5" stroke="#333" stroke-width="1"/>
  <!-- zoom window -->
  <rect x="1105.2" y="997.4" width="16" height="15.6" fill="none" stroke="#333" stroke-width="0.9" stroke-dasharray="2 1.4"/>
  <circle cx="1112" cy="1004" r="6.2" fill="#dfeae9" stroke="#333" stroke-width="1.1"/>
  <path d="M1116.6,1008.8 L1120.6,1012.6" stroke="#333" stroke-width="2.6" stroke-linecap="round"/>
  <!-- display -->
  <rect x="1149.5" y="997.6" width="16" height="12.6" rx="1.2" fill="#f7f7f7" stroke="#333" stroke-width="1.1"/>
  <rect x="1151.8" y="999.8" width="11.4" height="7.6" fill="#9bbce8" stroke="#1f3a66" stroke-width="0.8"/>
  <path d="M1151.8,1007.2 L1163.2,1007.2" stroke="#1a2f55" stroke-width="1.2"/>
  <path d="M1155.2,1010.4 L1159.8,1010.4 L1161,1013 L1154,1013Z" fill="#f4f4f4" stroke="#444" stroke-width="0.8"/>
  <!-- grid -->
  <defs><linearGradient id="grg" x1="0" y1="0" x2="0" y2="1"><stop offset="0" stop-color="#ffffff"/><stop offset="0.45" stop-color="#eef0f3"/><stop offset="1" stop-color="#aab0bd"/></linearGradient></defs>
  <rect x="1182.6" y="997.6" width="16" height="16" rx="0.8" fill="url(#grg)" stroke="#444" stroke-width="1.1"/>
  <path d="M1185.8,998 L1185.8,1013.2 M1189,998 L1189,1013.2 M1192.2,998 L1192.2,1013.2 M1195.4,998 L1195.4,1013.2 M1183,1000.8 L1198.2,1000.8 M1183,1004 L1198.2,1004 M1183,1007.2 L1198.2,1007.2 M1183,1010.4 L1198.2,1010.4" stroke="#6c6f78" stroke-width="0.8" fill="none"/>
  <!-- viewports -->
  <rect x="1215.6" y="998.6" width="15" height="13" rx="1" fill="#a9c7ee" stroke="#1f4e8f" stroke-width="1.2"/>
  <path d="M1223.1,998.6 L1223.1,1011.6 M1215.6,1005.1 L1230.6,1005.1" stroke="#1f4e8f" stroke-width="1.2"/>
  <g fill="#86acdf"><rect x="1218" y="1000.6" width="2.8" height="2.4"/><rect x="1225.6" y="1000.6" width="2.8" height="2.4"/><rect x="1218" y="1007.2" width="2.8" height="2.4"/><rect x="1225.6" y="1007.2" width="2.8" height="2.4"/></g>
</svg>

<!-- ================= STATUS / TIMELINE ================= -->
<div class="abs" style="left:1859px;top:1000px;font-size:12px;line-height:13px;color:#222;white-space:nowrap;letter-spacing:0px;-webkit-text-stroke:0.25px #222">Body1</div>
<svg id="timeline" style="left:308px;top:1025px" width="1612" height="51" viewBox="308 1025 1612 51">
  <!-- watermark -->
  <g fill="#fff" opacity=".5">
    <path d="M1842,1022 Q1852,1024 1856,1034 Q1860,1044 1874,1050 Q1872,1042 1878,1034 Q1884,1026 1892,1022Z"/>
    <path d="M1876,1040 L1887,1039 L1879,1035Z M1874,1044 L1882,1049 L1878,1041Z"/>
  </g>
  <text x="1855.6" y="1035.2" font-family="Liberation Sans, sans-serif" font-size="18" font-weight="bold" fill="#dcdcde" opacity=".55" letter-spacing="-0.5">JP</text>
  <!-- playback -->
  <g fill="#444">
    <rect x="319.8" y="1043.2" width="2.2" height="14.6"/><path d="M333,1043.6 L333,1057.2 L322.4,1050.4Z"/>
    <path d="M356,1043.6 L356,1057.2 L345.6,1050.4Z"/><rect x="357.4" y="1046.6" width="2" height="7.6"/>
    <path d="M373.2,1042 L373.2,1058.8 L385.8,1050.4Z"/>
    <rect x="398.8" y="1046.6" width="2" height="7.6"/><path d="M402.2,1043.6 L402.2,1057.2 L412.6,1050.4Z"/>
    <path d="M427,1043.6 L427,1057.2 L436.6,1050.4Z"/><rect x="437.2" y="1043.2" width="2.2" height="14.6"/>
  </g>
  <!-- timeline items -->
  <defs><linearGradient id="skg" x1="0" y1="0" x2="0" y2="1"><stop offset="0" stop-color="#ffffff"/><stop offset="0.55" stop-color="#d5e3f0"/><stop offset="1" stop-color="#86a8cb"/></linearGradient></defs>
  <path d="M473.2,1061.3 L473.2,1066.5 L497.7,1066.5 L497.7,1061.3" fill="none" stroke="#d0d0d2" stroke-width="1.8"/>
  <rect x="463.2" y="1040.2" width="18.6" height="18.7" fill="#fff" opacity=".8"/>
  <rect x="464.8" y="1041.8" width="15.4" height="15.5" fill="url(#skg)" stroke="#0c0c0c" stroke-width="1.25"/>
  <path d="M467.6,1043.6 L467.6,1051 Q467.8,1053.7 470.6,1053.7 L477.6,1053.7" fill="none" stroke="#0c0c0c" stroke-width="1.3"/>
  <path d="M469.4,1051.6 L471.2,1047.8 L478.4,1040.6 L480.6,1042.8 L473.4,1050Z" fill="#f8d33a"/>
  <path d="M469.4,1051.6 L471.2,1047.8 L473.4,1050Z" fill="#e0b98a"/>
  <path d="M469.4,1051.6 L470.2,1049.9 L471.2,1050.9Z" fill="#222"/>
  <path d="M472.4,1049 L479.6,1041.8" stroke="#fff3a0" stroke-width="0.8"/>
  <path d="M491,1041.3 L505.8,1041.3 Q506.6,1041.3 506.6,1042.1 L506.6,1057 Q506.6,1057.8 505.8,1057.8 L498.5,1057.8 L496.4,1055.7 L496.4,1050.5 L491,1050.5 Q490.2,1050.5 490.2,1049.7 L490.2,1042.1 Q490.2,1041.3 491,1041.3Z" fill="url(#tlog)" stroke="#6b3410" stroke-width="1"/>
  <defs><linearGradient id="tlog" x1="0" y1="0" x2="0.3" y2="1"><stop offset="0" stop-color="#fdd0a2"/><stop offset="1" stop-color="#f9b06e"/></linearGradient></defs>
  <path d="M491,1035.2 L494.2,1031.8 M496,1035.2 L499.2,1031.8 M501,1035.2 L505,1031.6" stroke="#555" stroke-width="2" stroke-linecap="round"/>
  <path d="M505.2,1034 L516.8,1034 L516.8,1038 L512.4,1043.4 L509.8,1043.4 L505.2,1038Z" fill="#5a5a5a"/>
  <rect x="509.9" y="1042" width="2.3" height="25.8" fill="#5a5a5a"/>
  <!-- settings gear -->
  <circle cx="1907.2" cy="1050.4" r="1.8" fill="#555"/><path transform="translate(1907.2,1050.4)" fill="#555" fill-rule="evenodd" d="M6.09,-1.61 L8.38,-1.40 L8.38,1.40 L6.09,1.61 L5.45,3.16 L6.92,4.94 L4.94,6.92 L3.16,5.45 L1.61,6.09 L1.40,8.38 L-1.40,8.38 L-1.61,6.09 L-3.16,5.45 L-4.94,6.92 L-6.92,4.94 L-5.45,3.16 L-6.09,1.61 L-8.38,1.40 L-8.38,-1.40 L-6.09,-1.61 L-5.45,-3.16 L-6.92,-4.94 L-4.94,-6.92 L-3.16,-5.45 L-1.61,-6.09 L-1.40,-8.38 L1.40,-8.38 L1.61,-6.09 L3.16,-5.45 L4.94,-6.92 L6.92,-4.94 L5.45,-3.16Z M3.40,0 A3.40,3.40 0 1,0 -3.40,0 A3.40,3.40 0 1,0 3.40,0Z"/>
</svg>

<!-- ================= VIEW CUBE ================= -->
<svg id="viewcube" style="left:1790px;top:130px" width="130" height="110" viewBox="1790 130 130 110">
  <defs>
    <filter id="blur2" x="-30%" y="-30%" width="160%" height="160%"><feGaussianBlur stdDeviation="3"/></filter>
    <filter id="blur05"><feGaussianBlur stdDeviation="0.35"/></filter>
  </defs>
  <path d="M1836,214 L1886,220 L1902,196 L1898,178 L1880,182Z" fill="#9a9aa0" opacity=".35" filter="url(#blur2)"/>
  <g filter="url(#blur05)">
  <path d="M1842.2,142.2 L1890,145.3 L1878.3,180.5 L1825,175Z" fill="#f4f5f6"/>
  <path d="M1825,175 L1878.3,180.5 L1882.2,216.7 L1834.4,210.5Z" fill="#f0f1f3"/>
  <path d="M1878.3,180.5 L1890,145.3 L1891.6,191 L1882.2,216.7Z" fill="#e9ebed"/>
  <g fill="none" stroke="#9d9da2" stroke-width="0.85" stroke-dasharray="5 2.2">
    <path d="M1842.2,142.2 L1890,145.3 L1878.3,180.5 L1825,175Z"/>
    <path d="M1878.3,180.5 L1882.2,216.7 M1890,145.3 L1891.6,191 L1882.2,216.7"/>
  </g>
  <path d="M1821.6,170 L1834.4,210.5" stroke="#5f67da" stroke-width="1.9" stroke-linecap="round"/>
  <path d="M1834.4,210.8 L1891,220.2" stroke="#ef9a86" stroke-width="1.8" stroke-linecap="round"/>
  <rect x="1880.8" y="211.6" width="2.6" height="5.6" fill="#8c8c90"/>
  </g>
  <text x="1813.6" y="168" font-family="Liberation Sans, sans-serif" font-size="16" font-weight="bold" fill="#6a72e0">Z</text>
  <text x="1893.4" y="225.6" font-family="Liberation Sans, sans-serif" font-size="12.5" font-weight="bold" fill="#f0957e">X</text>
  <text transform="matrix(0.98,0.09,-0.38,0.92,1847.6,160.6)" font-family="Liberation Sans, sans-serif" font-size="9.6" font-weight="bold" fill="#9a9a9e" letter-spacing="0.4">TOP</text>
  <text transform="matrix(0.98,0.13,0.06,1,1837.4,196.2)" font-family="Liberation Sans, sans-serif" font-size="9.6" font-weight="bold" fill="#9a9a9e" letter-spacing="0.3">FRONT</text>
</svg>

</body>
</html>
